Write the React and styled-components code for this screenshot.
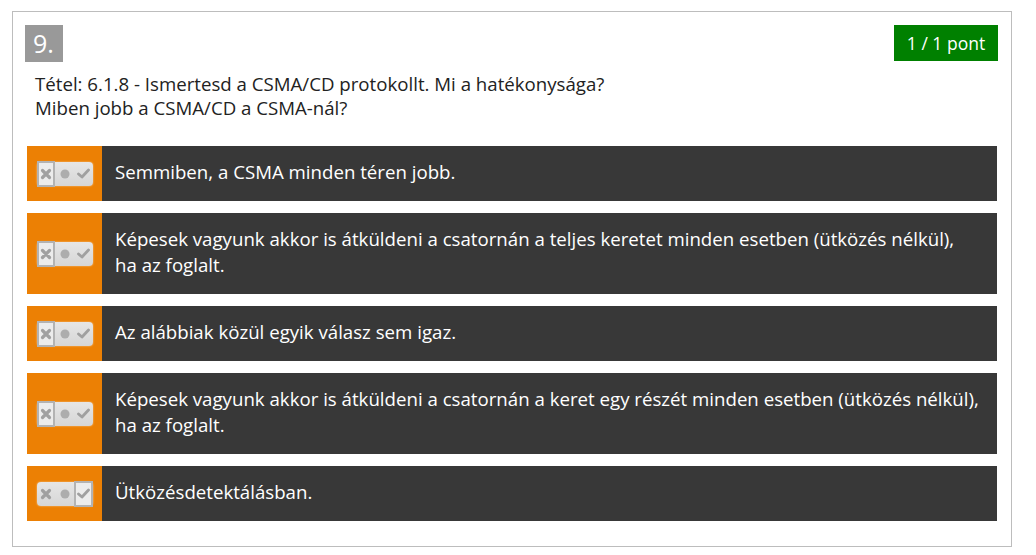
import React from "react";
import styled, { createGlobalStyle } from "styled-components";

const GlobalStyle = createGlobalStyle`
  body {
    margin: 0;
    background: #fff;
    font-family: "Open Sans", "Liberation Sans", sans-serif;
  }
`;

// the long answers break before "ha" like the original page does
const answers = [
  { text: "Semmiben, a CSMA minden téren jobb.", state: "no" },
  {
    text: "Képesek vagyunk akkor is átküldeni a csatornán a teljes keretet minden esetben (ütközés nélkül),\nha az foglalt.",
    state: "no",
  },
  { text: "Az alábbiak közül egyik válasz sem igaz.", state: "no" },
  {
    text: "Képesek vagyunk akkor is átküldeni a csatornán a keret egy részét minden esetben (ütközés nélkül),\nha az foglalt.",
    state: "no",
  },
  { text: "Ütközésdetektálásban.", state: "yes" },
];

const Toggle = ({ state }) => (
  <Pill>
    <Slot $active={state === "no"}>
      <svg width="12" height="12" viewBox="0 0 12 12">
        <path
          d="M2.5 2.5 L9.5 9.5 M9.5 2.5 L2.5 9.5"
          stroke="#a0a0a0"
          strokeWidth="3.2"
          strokeLinecap="round"
        />
      </svg>
    </Slot>
    <Slot $active={state === "none"}>
      <svg width="10" height="10" viewBox="0 0 10 10">
        <circle cx="5" cy="5" r="4.5" fill="#adadad" />
      </svg>
    </Slot>
    <Slot $active={state === "yes"}>
      <svg width="13" height="11" viewBox="0 0 13 11">
        <path
          d="M1.5 6 L5 9 L11.5 2"
          stroke="#a0a0a0"
          strokeWidth="2.8"
          fill="none"
          strokeLinecap="round"
          strokeLinejoin="round"
        />
      </svg>
    </Slot>
  </Pill>
);

export default function App() {
  return (
    <>
      <GlobalStyle />
      <Card>
        <Header>
          <Number>9.</Number>
          <Score>1 / 1 pont</Score>
        </Header>
        <Question>
          Tétel: 6.1.8 - Ismertesd a CSMA/CD protokollt. Mi a hatékonysága?
          <br />
          Miben jobb a CSMA/CD a CSMA-nál?
        </Question>
        <AnswerList>
          {answers.map((a, i) => (
            <AnswerRow key={i}>
              <Marker>
                <Toggle state={a.state} />
              </Marker>
              <AnswerText>{a.text}</AnswerText>
            </AnswerRow>
          ))}
        </AnswerList>
      </Card>
    </>
  );
}

const Card = styled.div`
  box-sizing: border-box;
  margin: 11px 0 0 12px;
  width: 1000px;
  border: 1px solid #bdbdbd;
  padding: 13px 13px 25px 12px;
`;

const Header = styled.div`
  display: flex;
  justify-content: space-between;
  align-items: flex-start;
`;

const Number = styled.div`
  width: 38px;
  height: 37px;
  background: #999;
  color: #fff;
  font-size: 25px;
  line-height: 37px;
  padding-left: 8px;
  box-sizing: border-box;
`;

const Score = styled.div`
  width: 104px;
  height: 36px;
  background: #008000;
  color: #fff;
  font-size: 17.5px;
  line-height: 36px;
  text-align: center;
`;

const Question = styled.div`
  margin: 10px 0 0 10px;
  font-size: 14pt;
  line-height: 24px;
  color: #222;
`;

const AnswerList = styled.div`
  display: flex;
  flex-direction: column;
  gap: 12px;
  margin: 26px 0 0 2px;
  width: 970px;
`;

const AnswerRow = styled.div`
  display: flex;
  align-items: stretch;
`;

const Marker = styled.div`
  flex: 0 0 75px;
  background: #ec8004;
  display: flex;
  align-items: center;
  justify-content: center;
`;

const AnswerText = styled.div`
  flex: 1;
  background: #383838;
  color: #fff;
  font-size: 14pt;
  line-height: 26px;
  padding: 13px 13px 16px 13px;
  white-space: pre-line;
`;

const Pill = styled.div`
  display: flex;
  width: 56px;
  height: 24px;
  border-radius: 4px;
  background: linear-gradient(#e6e6e6, #d6d6d6);
  box-shadow: 0 0 2px rgba(255, 255, 255, 0.6);
`;

const Slot = styled.div`
  flex: 1;
  display: flex;
  align-items: center;
  justify-content: center;
  box-sizing: border-box;
  margin: ${(p) => (p.$active ? "-1px 0" : "0")};
  border: ${(p) => (p.$active ? "2px solid #b3b3b3" : "2px solid transparent")};
  background: ${(p) => (p.$active ? "#ececec" : "transparent")};
`;
